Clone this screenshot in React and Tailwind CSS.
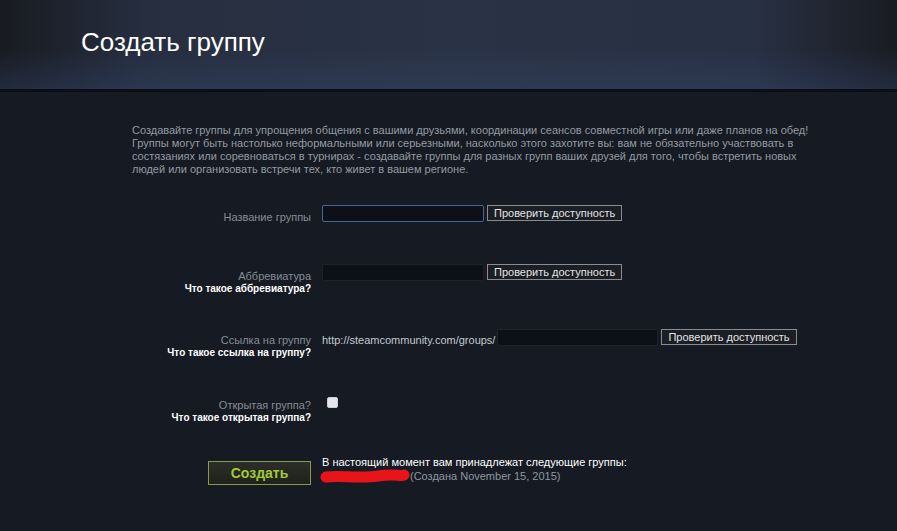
import React from 'react';

// Steam-style "create group" page

const font = { fontFamily: '"Liberation Sans", Arial, sans-serif' };

const CheckButton = () => (
  <button className="h-[16px] px-[6px] border border-[#8c8c8c] bg-[#1b1e24] text-[#e4e4e4] text-[11px] leading-[14px] whitespace-nowrap">
    Проверить доступность
  </button>
);

const TextBox = ({ focused, width = 'w-[162px]' }) => (
  <input
    type="text"
    className={
      focused
        ? `${width} h-[17px] bg-[#0d1117] border border-[#45659a] rounded-[2px] outline-none`
        : `${width} h-[17px] bg-[#0d1117] border border-[#1c222b] rounded-[2px] outline-none`
    }
  />
);

const Label = ({ title, help, pt = 'pt-[4px]' }) => (
  <div className={`w-[179px] shrink-0 text-right ${pt}`}>
    <div className="text-[11px] leading-[14px] text-[#858d96]">{title}</div>
    {help && (
      <div className="text-[10px] leading-[12px] font-bold text-white whitespace-nowrap">{help}</div>
    )}
  </div>
);

const intro = [
  'Создавайте группы для упрощения общения с вашими друзьями, координации сеансов совместной игры или даже планов на обед!',
  'Группы могут быть настолько неформальными или серьезными, насколько этого захотите вы: вам не обязательно участвовать в',
  'состязаниях или соревноваться в турнирах - создавайте группы для разных групп ваших друзей для того, чтобы встретить новых',
  'людей или организовать встречи тех, кто живет в вашем регионе.',
];

export default function App() {
  return (
    <div className="w-[897px] h-[531px] overflow-hidden bg-[#151a23]" style={font}>
      {/* header */}
      <div className="h-[89px] pl-[81px] pt-[29px] bg-[linear-gradient(to_bottom,rgba(0,0,0,0)_55%,rgba(52,72,112,0.35)),linear-gradient(90deg,#181b21,#262e3f_16%,#2a3346_50%,#283043_84%,#191c22)]">
        <h1 className="text-[26px] leading-none text-white">Создать группу</h1>
      </div>
      <div className="h-[3px] bg-[#0a0e15]" />

      {/* intro */}
      <div className="pl-[132px] pt-[32px] text-[11px] leading-[13px] text-[#939aa2]">
        {intro.map((line) => (
          <div key={line} className="whitespace-nowrap">{line}</div>
        ))}
      </div>

      {/* form */}
      <div className="pl-[132px] pt-[29px]">
        <div className="flex gap-[11px] h-[59px]">
          <Label title="Название группы" pt="pt-[5px]" />
          <div className="flex gap-[3px] items-start">
            <TextBox focused />
            <CheckButton />
          </div>
        </div>

        <div className="flex gap-[11px] h-[65px]">
          <Label title="Аббревиатура" help="Что такое аббревиатура?" pt="pt-[5px]" />
          <div className="flex gap-[3px] items-start">
            <TextBox />
            <CheckButton />
          </div>
        </div>

        <div className="flex gap-[11px] h-[68px]">
          <Label title="Ссылка на группу" help="Что такое ссылка на группу?" pt="pt-[4px]" />
          <div className="flex items-start">
            <span className="pt-[4px] text-[11px] leading-[14px] text-[#c3c9cf]">http://steamcommunity.com/groups/</span>
            <div className="ml-[2px] flex gap-[3px]">
              <TextBox width="w-[161px]" />
              <CheckButton />
            </div>
          </div>
        </div>

        <div className="flex gap-[11px] h-[58px]">
          <Label title="Открытая группа?" help="Что такое открытая группа?" pt="pt-[1px]" />
          <div className="pl-[5px]">
            <input type="checkbox" className="appearance-none block w-[11px] h-[11px] rounded-[2px] bg-[#e6e7ec] border border-[#c9ccd4]" />
          </div>
        </div>

        <div className="flex gap-[11px]">
          <div className="w-[179px] shrink-0 flex justify-end pt-[6px]">
            <button className="w-[103px] h-[24px] border border-[#899a4c] bg-[linear-gradient(to_bottom,#2c2f27,#1f211b)] text-[14px] font-bold text-[#a3c93a]">
              Создать
            </button>
          </div>
          <div className="text-[11px] leading-[14px]">
            <div className="text-white">В настоящий момент вам принадлежат следующие группы:</div>
            <div className="flex items-center">
              <svg width="90" height="14" viewBox="0 0 90 14" className="-ml-[2px]">
                <path d="M6 8 C20 6, 40 10, 58 7 S80 8, 84 6" stroke="#e8141a" strokeWidth="11" strokeLinecap="round" fill="none" />
              </svg>
              <span className="text-[#8f979f]">(Создана November 15, 2015)</span>
            </div>
          </div>
        </div>
      </div>
    </div>
  );
}
